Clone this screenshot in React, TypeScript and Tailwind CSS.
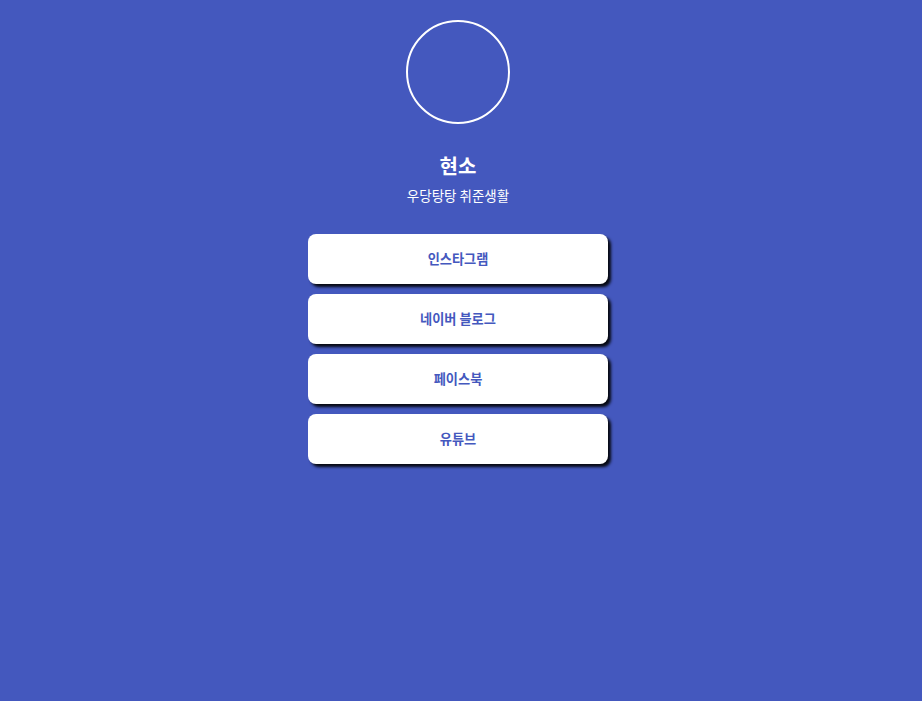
const LINKS = ["인스타그램", "네이버 블로그", "페이스북", "유튜브"];

export default function App() {
  return (
    <div
      className="flex min-h-[701px] flex-col items-center bg-[#4458be] pr-[6px] text-white"
      style={{ fontFamily: '"Noto Sans CJK KR", "Noto Sans", sans-serif' }}
    >
      <div className="mt-5 h-[104px] w-[104px] rounded-full border-2 border-white" />
      <h1 className="mt-[28px] text-[20px] font-bold leading-[28px]">현소</h1>
      <p className="mt-[5px] text-[13.5px] leading-5">우당탕탕 취준생활</p>
      <div className="mt-[29px] flex flex-col gap-[10px]">
        {LINKS.map((label) => (
          <a
            key={label}
            className="flex h-[50px] w-[300px] items-center justify-center rounded-lg bg-white text-[13.2px] font-bold text-[#4458be] shadow-[3px_3px_3px_rgba(0,0,0,0.9)]"
          >
            {label}
          </a>
        ))}
      </div>
    </div>
  );
}
